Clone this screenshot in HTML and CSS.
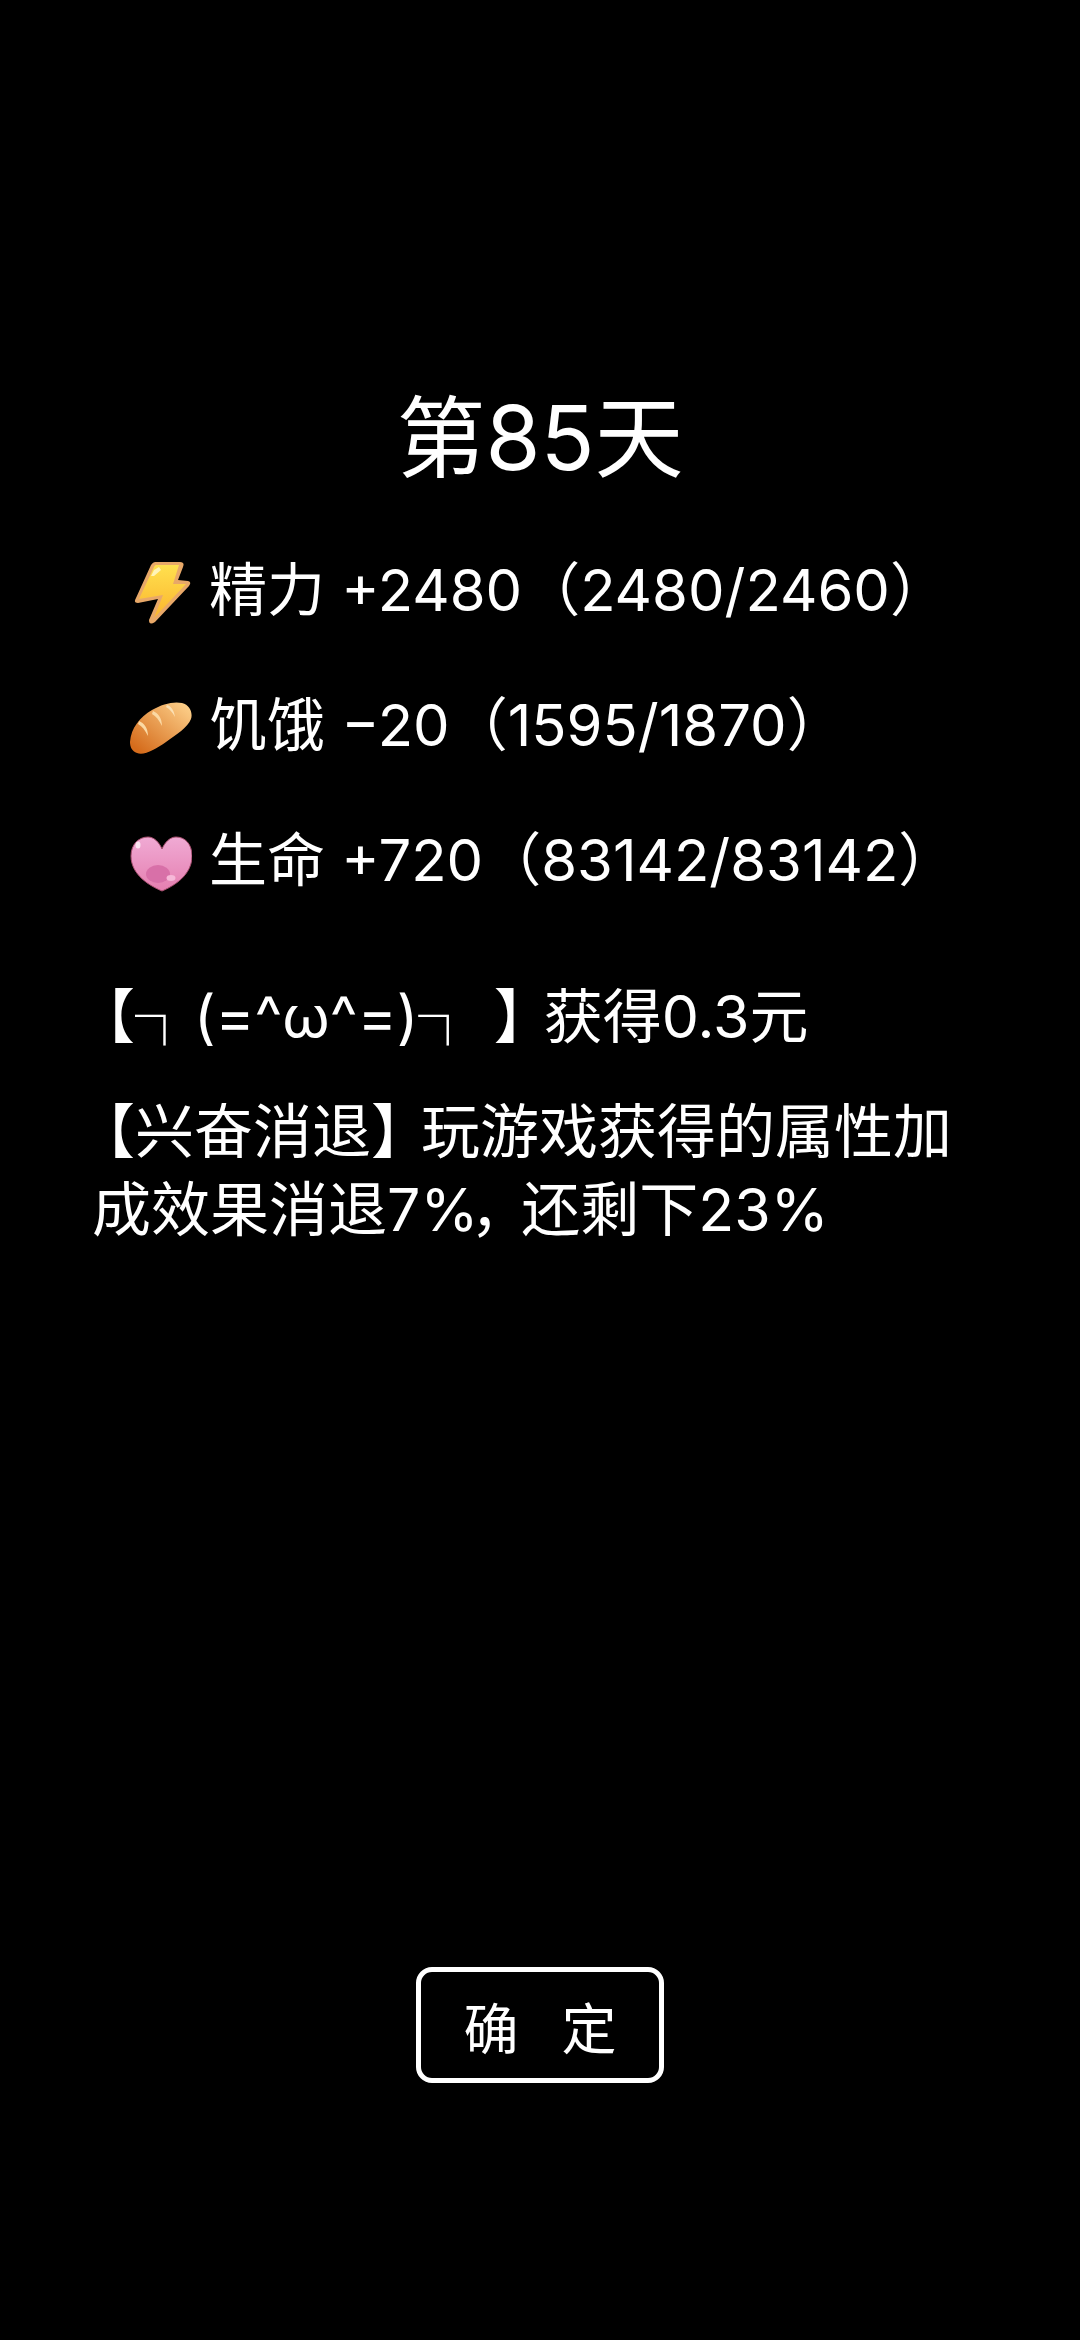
FILE: index.html
```html
<!DOCTYPE html>
<html>

<head>
    <meta charset="utf-8">
    <meta name="viewport" content="width=device-width, initial-scale=1">
    <title>第85天</title>
    <link rel="stylesheet" href="styles.css">
</head>

<body>
    <div class="page">
        <h1 class="title">第85天</h1>

        <div class="stats">
            <div class="stat">
                <svg class="icon" viewBox="0 0 64 64">
                    <defs>
                        <linearGradient id="bolt" x1="0" y1="0" x2="0" y2="1">
                            <stop offset="0" stop-color="#ffe04e" />
                            <stop offset="1" stop-color="#fbb52e" />
                        </linearGradient>
                    </defs>
                    <path d="M27 1 L52 1 Q57 1 55 6 L50 19 L60 20 Q64 21 61 25 L27 61 Q21 65 21 59 L30 38 L10 42 Q5 42 8 37 L23 4 Q25 1 27 1 Z" fill="#e8a868" />
                    <path d="M28 4 L51 4 L45 23 L58 23 L26 57 L35 34 L11 38 L26 6 Q27 4 28 4 Z" fill="url(#bolt)" />
                    <path d="M26 9 L31 6 L33 9 L26 15 L23 15 Z" fill="#fff4b8" />
                </svg>
                <span>精力 +2480（2480/2460）</span>
            </div>
            <div class="stat">
                <svg class="icon" viewBox="0 0 64 64">
                    <defs>
                        <linearGradient id="bread" x1="0" y1="1" x2="1" y2="0">
                            <stop offset="0.100" stop-color="#d56c1c" />
                            <stop offset="0.950" stop-color="#fdd08a" />
                        </linearGradient>
                    </defs>
                    <path d="M2 46 C3 32 12 21 24 14 C34 8 46 5 54 7 C62 9 65 17 63 23 C60 31 48 39 38 46 C28 53 16 60 9 57 C4 55 2 51 2 46 Z" fill="url(#bread)" />
                    <path d="M11 25 C16 27 20 32 20 40 C17 34 14 30 10 28 Z" fill="#fbd9a4" />
                    <path d="M25 15 C30 17 34 22 34 30 C31 24 28 20 24 18 Z" fill="#fbd9a4" />
                    <path d="M39 9 C43 10 46 14 47 21 C44 16 42 13 38 11 Z" fill="#fbe0b4" />
                </svg>
                <span>饥饿 −20（1595/1870）</span>
            </div>
            <div class="stat">
                <svg class="icon" viewBox="0 0 64 64">
                    <defs>
                        <linearGradient id="heart" x1="0" y1="0" x2="0" y2="1">
                            <stop offset="0" stop-color="#f0aad4" />
                            <stop offset="1" stop-color="#e57fb0" />
                        </linearGradient>
                    </defs>
                    <path d="M34 60 C22 55 3 44 3 25 C3 13 11 6 20 6 C26 6 31 11 34 18 C37 11 42 6 48 6 C57 6 64 13 64 25 C64 44 46 55 34 60 Z" fill="url(#heart)" stroke="#a85070" stroke-width="1" />
                    <ellipse cx="30" cy="43" rx="12" ry="9" fill="#d870a8" />
                    <ellipse cx="43" cy="47" rx="4.500" ry="3" fill="#f6b8d8" />
                    <ellipse cx="10" cy="14" rx="2.500" ry="3.500" fill="#fbe4f2" />
                </svg>
                <span>生命 +720（83142/83142）</span>
            </div>
        </div>

        <p class="log"><span class="open">【</span>┐(=^ω^=)┐ <span class="close">】</span>获得0.3元</p>
        <p class="log">
            <span class="line"><span class="open">【</span>兴奋消退<span class="close">】</span>玩游戏获得的属性加</span>
            <span class="line">成效果消退7<span class="tight">%，</span>还剩下23%</span>
        </p>

        <button class="btn">确<span class="btn-gap"></span>定</button>
    </div>
</body>

</html>
```

FILE: styles.css
```css
html,
body {
    margin: 0;
    height: 100%;
    background: #000;
}

.page {
    box-sizing: border-box;
    height: 2340px;
    padding: 376px 92px 257px;
    display: flex;
    flex-direction: column;
    color: #fff;
    font-family: Inter, "Noto Sans CJK SC", sans-serif;
}

.title {
    margin: 0;
    font-size: 89px;
    font-weight: 400;
    line-height: 124px;
    text-align: center;
}

.stats {
    margin-top: 46px;
    padding-left: 36px;
    display: flex;
    flex-direction: column;
    gap: 55px;
}

.stat {
    display: flex;
    align-items: center;
    gap: 17px;
    height: 80px;
    font-size: 58px;
    white-space: nowrap;
}

.icon {
    width: 64px;
    height: 64px;
    margin-top: 14px;
    flex: none;
}

.log {
    margin: 82px 0 0;
    font-size: 59px;
    line-height: 78px;
}

.log + .log {
    margin-top: 37px;
}

.line {
    display: block;
    white-space: nowrap;
}

.open {
    margin-left: -16px;
}

.close {
    letter-spacing: -9px;
}

.tight {
    letter-spacing: -8px;
}

.btn {
    margin: auto auto 0;
    width: 248px;
    height: 116px;
    box-sizing: border-box;
    border: 5px solid #fff;
    border-radius: 16px;
    background: #000;
    color: #fff;
    font-family: inherit;
    font-size: 55px;
    padding: 0;
}

.btn-gap {
    display: inline-block;
    width: 43px;
}
```
